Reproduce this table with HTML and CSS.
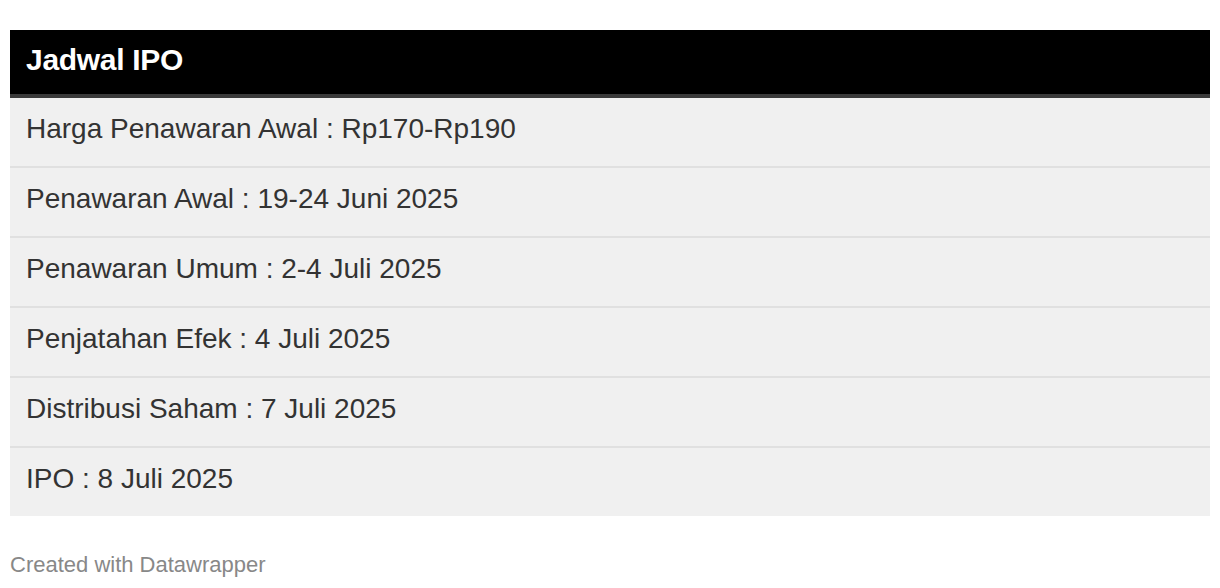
FILE: index.html
```html
<!DOCTYPE html>
<html>
<head>
<meta charset="utf-8">
<link rel="stylesheet" href="styles.css">
</head>
<body>
<div class="wrap">
  <div class="table">
    <div class="head">Jadwal IPO</div>
    <div class="row">Harga Penawaran Awal : Rp170-Rp190</div>
    <div class="row">Penawaran Awal : 19-24 Juni 2025</div>
    <div class="row">Penawaran Umum : 2-4 Juli 2025</div>
    <div class="row">Penjatahan Efek : 4 Juli 2025</div>
    <div class="row">Distribusi Saham : 7 Juli 2025</div>
    <div class="row last">IPO : 8 Juli 2025</div>
  </div>
  <div class="foot">Created with Datawrapper</div>
</div>
</body>
</html>
```
FILE: styles.css
```css
html, body { margin: 0; padding: 0; background: #fff; }
body { font-family: "Liberation Sans", Arial, sans-serif; }
.wrap { padding: 30px 10px 0 10px; }
.table { display: flex; flex-direction: column; }
.head {
  background: #000;
  color: #fff;
  font-weight: bold;
  font-size: 30px;
  letter-spacing: -0.3px;
  height: 64px;
  line-height: 60px;
  padding-left: 16px;
  border-bottom: 4px solid #3a3a3a;
}
.row {
  background: #f0f0f0;
  color: #333;
  font-size: 28px;
  height: 68px;
  line-height: 62px;
  padding-left: 16px;
  border-bottom: 2px solid #e0e0e0;
}
.row.last { border-bottom: none; }
.foot {
  margin-top: 36px;
  color: #888;
  font-size: 22px;
  line-height: 26px;
}
```
